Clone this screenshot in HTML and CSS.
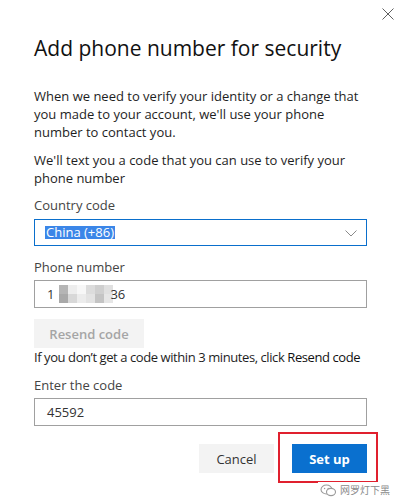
FILE: index.html
```html
<!DOCTYPE html>
<html>
<head>
<meta charset="utf-8">
<link rel="stylesheet" href="styles.css">
</head>
<body>
<div class="dialog">
  <button class="close" aria-label="Close">
    <svg width="12" height="12" viewBox="0 0 12 12"><path d="M0.5 0.5L11.5 11.5M11.5 0.5L0.5 11.5" stroke="#5f5f5f" stroke-width="1" fill="none"/></svg>
  </button>
  <h1 class="title">Add phone number for security</h1>
  <p class="para">When we need to verify your identity or a change that<br>you made to your account, we'll use your phone<br>number to contact you.</p>
  <p class="para p2">We'll text you a code that you can use to verify your<br>phone number</p>
  <div class="label l-country">Country code</div>
  <div class="select">
    <span class="selected">China (+86)</span>
    <svg class="chev" width="12" height="7" viewBox="0 0 12 7"><path d="M0.5 0.5L6 6L11.5 0.5" stroke="#8a8a8a" stroke-width="1" fill="none"/></svg>
  </div>
  <div class="label l-phone">Phone number</div>
  <div class="input">1<span class="mosaic"><i class="c1"></i><i class="c2"></i><i class="c3"></i><i class="c4"></i><i class="c5"></i><i class="c6"></i><i class="c7"></i><i class="c8"></i><i class="c9"></i><i class="c10"></i><i class="c11"></i><i class="c12"></i></span>36</div>
  <div class="resend-row"><button class="btn resend">Resend code</button></div>
  <p class="hint">If you don’t get a code within 3 minutes, click <span class="dark">Resend code</span></p>
  <div class="label l-code">Enter the code</div>
  <div class="input code">45592</div>
  <div class="actions">
    <button class="btn cancel">Cancel</button>
    <button class="btn primary">Set up</button>
  </div>
  <div class="annot"></div>
  <div class="watermark">
    <svg width="17" height="13" viewBox="0 0 17 13"><ellipse cx="6.5" cy="5.5" rx="5.5" ry="4.5" fill="none" stroke="#9a9a9a" stroke-width="1.1"/><ellipse cx="11" cy="8" rx="4.5" ry="3.6" fill="#fff" stroke="#9a9a9a" stroke-width="1.1"/><circle cx="4.6" cy="4.5" r="0.7" fill="#9a9a9a"/><circle cx="8.2" cy="4.5" r="0.7" fill="#9a9a9a"/></svg>
    <span>网罗灯下黑</span>
  </div>
</div>
</body>
</html>
```
FILE: styles.css
```css
html, body {
  margin: 0;
  padding: 0;
  background: #fff;
}
body {
  font-family: "Open Sans", "Noto Sans", sans-serif;
  color: #1b1b1b;
  width: 401px;
  height: 503px;
  overflow: hidden;
}
.dialog {
  position: relative;
  padding: 0 34px;
  width: 333px;
}
.close {
  position: absolute;
  top: 8px;
  left: 382px;
  padding: 0;
  border: 0;
  background: none;
  width: 12px;
  height: 12px;
  display: block;
}
.close svg { display: block; }
.title {
  margin: 0;
  padding-top: 33px;
  font-size: 21px;
  font-weight: 400;
  line-height: 30px;
  color: #111;
}
.para {
  margin: 24px 0 0;
  font-size: 13px;
  line-height: 18px;
  color: #1e1e1e;
}
.para.p2 { margin-top: 10px; }
.label {
  font-size: 13px;
  line-height: 18px;
  color: #444;
}
.l-country { margin-top: 9px; }
.select {
  margin-top: 5px;
  height: 25px;
  border: 1px solid #0a6fcc;
  display: flex;
  align-items: center;
  justify-content: space-between;
  padding: 0 9px 0 10px;
  font-size: 13px;
}
.selected {
  background: #3b86e8;
  color: #fff;
  line-height: 13px;
  padding: 0 1px;
}
.chev { display: block; margin-top: 1px; }
.l-phone { margin-top: 12px; }
.input {
  margin-top: 4px;
  height: 26px;
  border: 1px solid #a0a0a0;
  display: flex;
  align-items: center;
  padding: 0 12px;
  font-size: 13px;
  color: #333;
}
.mosaic {
  display: inline-grid;
  grid-template-columns: repeat(6, 9px);
  grid-template-rows: repeat(2, 9px);
  margin: 0 -3px 0 5px;
}
.mosaic i { display: block; }
.c1 { background: #b5b5b5; }
.c2 { background: #ededed; }
.c3 { background: #f7f7f7; }
.c4 { background: #dcdcdc; }
.c5 { background: #cfcfcf; }
.c6 { background: #e0e0e0; }
.c7 { background: #a9a9a9; }
.c8 { background: #d8d8d8; }
.c9 { background: #ececec; }
.c10 { background: #e3e3e3; }
.c11 { background: #c4c4c4; }
.c12 { background: #e6e6e6; }
.resend-row { margin-top: 11px; display: flex; }
.btn {
  font-family: inherit;
  border: 0;
  padding: 0;
  font-size: 13px;
  height: 29px;
  display: flex;
  align-items: center;
  justify-content: center;
}
.resend {
  width: 110px;
  background: #f3f3f3;
  color: #a5a5a5;
  font-weight: 600;
}
.hint {
  margin: 0;
  font-size: 13px;
  line-height: 18px;
  color: #1e1e1e;
  white-space: nowrap;
  letter-spacing: -0.42px;
}
.dark { color: #111; }
.l-code { margin-top: 10px; }
.code { margin-top: 4px; }
.actions {
  margin-top: 18px;
  display: flex;
  justify-content: flex-end;
  gap: 18px;
}
.cancel {
  width: 75px;
  background: #f3f3f3;
  color: #333;
}
.primary {
  width: 75px;
  background: #0a70cf;
  color: #fff;
  font-weight: 700;
}
.annot {
  position: absolute;
  left: 278px;
  top: 432px;
  width: 96px;
  height: 47px;
  border: 2px solid #e0202e;
  pointer-events: none;
}
.watermark {
  position: absolute;
  left: 318px;
  top: 482px;
  display: flex;
  align-items: center;
  gap: 3px;
  white-space: nowrap;
  font-family: "Noto Sans CJK SC", sans-serif;
  font-size: 10px;
  line-height: 16px;
  color: #8a8a8a;
  background: #fff;
  padding: 0 2px;
}
.watermark svg { display: block; }
```
